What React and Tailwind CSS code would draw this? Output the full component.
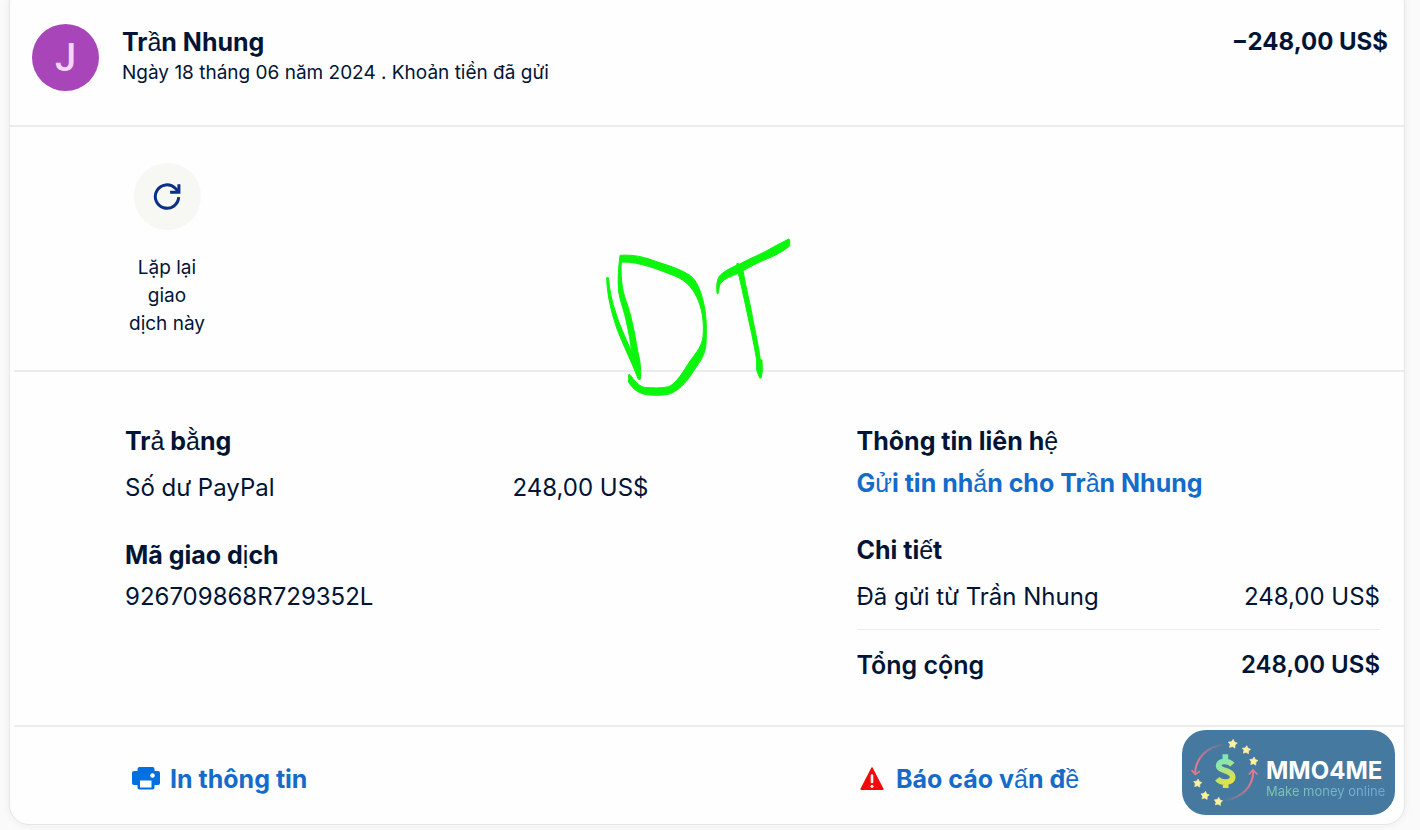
const TRANSACTION = {
  name: 'Trần Nhung',
  meta: 'Ngày 18 tháng 06 năm 2024 . Khoản tiền đã gửi',
  amount: '248,00 US$',
  code: '926709868R729352L',
};

const STARS = [
  [188, 87, 14],
  [229, 105, 13],
  [251, 139, 13],
  [83, 205, 13],
  [105, 242, 13],
  [145, 260, 13],
];

const starPoints = (cx, cy, r) =>
  Array.from({ length: 10 }, (_, i) => {
    const radius = i % 2 ? r * 0.55 : r;
    const angle = (Math.PI / 5) * i - Math.PI / 2 + 0.12;
    return `${cx + radius * Math.cos(angle)},${cy + radius * Math.sin(angle)}`;
  }).join(' ');

// Vietnamese letters with stacked marks use the lighter fallback face
const Bold = ({ children }) => (
  <>
    {children.split(/([\u1ea0-\u1ef9]+)/).map((part, i) =>
      i % 2 ? (
        <span key={i} className="font-['Liberation_Sans'] font-normal">{part}</span>
      ) : (
        part
      )
    )}
  </>
);

const SectionTitle = ({ children }) => (
  <h2 className="text-[25px] leading-8 font-bold">
    <Bold>{children}</Bold>
  </h2>
);

const PrinterIcon = () => (
  <svg viewBox="0 0 28 24" className="h-6 w-7 shrink-0" aria-hidden="true">
    <path
      fill="#0070e0"
      d="M7.500 0h13a2 2 0 0 1 2 2v2H26a2 2 0 0 1 2 2v10a2 2 0 0 1-2 2h-3.500v2.500a2 2 0 0 1-2 2h-13a2 2 0 0 1-2-2V18H2a2 2 0 0 1-2-2V6a2 2 0 0 1 2-2h3.500V2a2 2 0 0 1 2-2z"
    />
    <path fill="#fff" d="M8 13.500h11.500V20.500H8z" />
    <circle cx="20.500" cy="8.500" r="2.300" fill="#fff" />
  </svg>
);

const WarningIcon = () => (
  <svg viewBox="0 0 24 24" className="size-6 shrink-0" aria-hidden="true">
    <path
      d="M12 1 22.800 22.200H1.200z"
      fill="#f20a0a"
      stroke="#f20a0a"
      strokeWidth="1.600"
      strokeLinejoin="round"
    />
    <path d="M12 8.500v6.500" stroke="#fff" strokeWidth="2.600" strokeLinecap="round" />
    <circle cx="12" cy="19.300" r="1.500" fill="#fff" />
  </svg>
);

const RepeatIcon = () => (
  <svg viewBox="0 0 28 28" className="size-7" fill="none" stroke="#0b2f86" strokeWidth="3" aria-hidden="true">
    <path d="M25.700 14.200A11.700 11.700 0 1 1 22.300 5.300l3 3.200" />
    <path d="M25.900 1.200v8h-8.800" />
  </svg>
);

const Signature = () => (
  <svg
    viewBox="0 0 660 555"
    className="pointer-events-none absolute top-60 left-[580px] h-[185px] w-[220px]"
    fill="#0cf50c"
    stroke="#0cf50c"
    strokeWidth="3"
    strokeLinejoin="round"
    aria-hidden="true"
  >
    <path d="M50 158C51 210 64 262 81 312C98 358 125 410 145 463L151 463C154 430 150 405 143 378C133 315 122 265 109 230C94 190 92 150 94 111C150 110 205 134 255 153C290 168 308 190 321 218C336 250 341 285 340 320C340 362 320 380 300 408C278 442 262 471 237 485C214 490 184 489 162 487C145 482 133 466 120 449L116 449L116 472C131 496 150 507 172 509C196 512 226 512 244 505C275 490 294 464 311 438C326 414 346 392 348 358C350 320 350 275 342 240C334 200 320 164 298 150C264 128 218 117 180 103C148 92 120 89 90 91C86 125 82 160 86 200C92 236 104 262 109 290C117 325 121 350 125 380C103 332 88 298 78 265C65 230 59 195 55 158Z" />
    <path d="M381 206C378 170 383 155 398 144C412 134 426 127 440 121L441 115L449 117C483 98 520 85 550 66L596 42L599 44L599 63C578 80 553 93 525 104C500 114 480 126 459 137C468 190 482 240 490 290C498 330 506 366 511 404L516 405L517 438L513 459L509 459L500 436L500 405C491 350 479 300 469 252C460 210 452 175 445 145C425 153 405 160 392 174C386 184 387 195 384 206Z" />
  </svg>
);

const Watermark = () => (
  <div className="absolute right-[9px] bottom-[9px] flex h-[85px] w-[213px] items-center rounded-3xl bg-[#46799f]">
    <svg viewBox="36 45 240 255" className="h-[85px] w-20 shrink-0" aria-hidden="true">
      <defs>
        <linearGradient id="dollar" gradientUnits="userSpaceOnUse" x1="145" y1="130" x2="190" y2="210">
          <stop offset="0.100" stopColor="#80e8b8" />
          <stop offset="0.900" stopColor="#e8e040" />
        </linearGradient>
        <linearGradient id="arcLeft" x1="0" y1="1" x2="1" y2="0">
          <stop offset="0.200" stopColor="#e8788c" />
          <stop offset="1" stopColor="#e8788c" stopOpacity="0.100" />
        </linearGradient>
        <linearGradient id="arcRight" x1="1" y1="0" x2="0" y2="1">
          <stop offset="0.200" stopColor="#e8788c" />
          <stop offset="1" stopColor="#e8788c" stopOpacity="0.100" />
        </linearGradient>
      </defs>
      <path d="M160 89C112 94 76 130 75 175" fill="none" stroke="url(#arcLeft)" strokeWidth="6" />
      <path d="M66 167l10 11 12-8" fill="none" stroke="#e8788c" strokeWidth="5" strokeLinecap="round" />
      <path d="M166 255C214 250 250 215 250 168" fill="none" stroke="url(#arcRight)" strokeWidth="6" />
      <path d="M238 177l11-12 12 12" fill="none" stroke="#e8788c" strokeWidth="5" strokeLinecap="round" />
      <path
        d="M187 149C178 138 147 134 146 152C146 169 188 164 188 186C188 206 153 205 142 191M166 118v20M167 198v21"
        fill="none"
        stroke="url(#dollar)"
        strokeWidth="17"
      />
      {STARS.map(([x, y, r]) => (
        <polygon
          key={`${x}-${y}`}
          points={starPoints(x, y, r)}
          fill="#fdf0a0"
          stroke="#fdf0a0"
          strokeWidth="2"
          strokeLinejoin="round"
        />
      ))}
    </svg>
    <div className="ml-1 pt-3">
      <p className="text-2xl leading-6 font-bold text-white">MMO4ME</p>
      <p className="bg-linear-to-r from-[#7fc8ae] to-[#6fa6dc] bg-clip-text text-[13px] leading-4 text-transparent">
        Make money online
      </p>
    </div>
  </div>
);

const App = () => (
  <div className="min-h-screen overflow-hidden bg-[#fafafa] pr-[15px] pl-[9px] font-['Inter',sans-serif] text-[#001435]">
    <main className="relative -mt-4 rounded-[20px] border border-[#e6e6e6] bg-[#fefefe] pt-4 text-2xl leading-8 shadow-[0_0_8px_rgba(0,0,0,0.06)]">

      {/* Header */}
      <header className="flex items-start border-b-2 border-[#ececec] pt-[23px] pr-4 pb-[34px] pl-[22px]">
        <div className="flex size-[67px] shrink-0 items-center justify-center rounded-full bg-[#a846b9] font-['Roboto'] text-[38px] leading-none font-medium text-[#f3d5f7]">
          J
        </div>
        <div className="ml-[23px] flex-1 pt-[2px]">
          <h1 className="text-[25px] leading-8 font-bold">
            <Bold>{TRANSACTION.name}</Bold>
          </h1>
          <p className="text-[19px] leading-[30px]">{TRANSACTION.meta}</p>
        </div>
        <p className="pt-[2px] font-bold">−{TRANSACTION.amount}</p>
      </header>

      {/* Repeat action */}
      <section className="ml-1 border-b-2 border-[#ececec] pt-9 pb-8 pl-[115px]">
        <button className="flex w-[76px] flex-col items-center">
          <span className="flex size-[67px] items-center justify-center rounded-full bg-[#f7f7f4]">
            <RepeatIcon />
          </span>
          <span className="mt-6 text-[19px] leading-7">Lặp lại giao dịch&nbsp;này</span>
        </button>
      </section>

      {/* Payment details */}
      <section className="ml-1 grid grid-cols-2 gap-x-52 border-b-2 border-[#ececec] pt-[53px] pr-6 pb-11 pl-[111px]">
        <div>
          <SectionTitle>Trả bằng</SectionTitle>
          <div className="mt-[15px] flex justify-between">
            <span>Số dư PayPal</span>
            <span>{TRANSACTION.amount}</span>
          </div>
          <div className="mt-[35px]">
            <SectionTitle>Mã giao dịch</SectionTitle>
          </div>
          <p className="mt-[10px]">{TRANSACTION.code}</p>
        </div>

        <div>
          <SectionTitle>Thông tin liên hệ</SectionTitle>
          <a href="#message" className="mt-[10px] block text-[25px] leading-8 font-bold text-[#146bca]">
            <Bold>Gửi tin nhắn cho Trần Nhung</Bold>
          </a>
          <div className="mt-[35px]">
            <SectionTitle>Chi tiết</SectionTitle>
          </div>
          <div className="mt-[15px] flex justify-between border-b border-[#ececec] pb-4">
            <span>Đã gửi từ Trần Nhung</span>
            <span>{TRANSACTION.amount}</span>
          </div>
          <div className="mt-[19px] flex justify-between font-semibold">
            <span className="text-[25px]">Tổng cộng</span>
            <span>{TRANSACTION.amount}</span>
          </div>
        </div>
      </section>

      {/* Footer links */}
      <footer className="ml-1 grid grid-cols-2 gap-x-52 pt-9 pr-6 pb-[29px] pl-[118px] text-[25px] leading-8 font-bold text-[#146bca]">
        <a href="#print" className="flex items-center gap-[10px]">
          <PrinterIcon />
          In thông tin
        </a>
        <a href="#report" className="flex items-center gap-3">
          <WarningIcon />
          <span><Bold>Báo cáo vấn đề</Bold></span>
        </a>
      </footer>

      <Signature />
      <Watermark />
    </main>
  </div>
);

export default App;
